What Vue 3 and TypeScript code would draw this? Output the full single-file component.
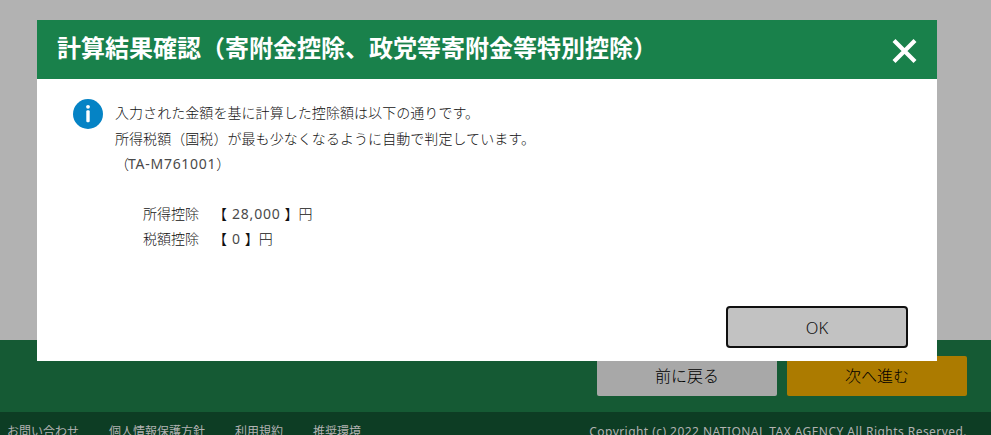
<script setup lang="ts">
interface Deduction {
  label: string
  amount: number
}

const footerLinks: string[] = ['お問い合わせ', '個人情報保護方針', '利用規約', '推奨環境']

const deductions: Deduction[] = [
  { label: '所得控除', amount: 28000 },
  { label: '税額控除', amount: 0 },
]

const yen = (n: number): string => n.toLocaleString('en-US')
</script>

<template>
  <div class="screen">
    <div class="page">
      <main class="content"></main>
      <nav class="actions">
        <button class="btn back" type="button">前に戻る</button>
        <button class="btn next" type="button">次へ進む</button>
      </nav>
      <footer class="footer">
        <ul class="links">
          <li v-for="link in footerLinks" :key="link">{{ link }}</li>
        </ul>
        <small class="copyright">Copyright (c) 2022 NATIONAL TAX AGENCY All Rights Reserved.</small>
      </footer>
    </div>

    <section class="dialog" role="dialog" aria-modal="true">
      <header class="dialog-header">
        <h1>計算結果確認（寄附金控除、政党等寄附金等特別控除）</h1>
        <button class="close" type="button">
          <svg viewBox="0 0 26 26" width="26" height="26">
            <path d="M3 2.5 L24 23.5 M24 2.5 L3 23.5" fill="none" stroke="#fff" stroke-width="4.2" />
          </svg>
        </button>
      </header>
      <div class="dialog-body">
        <svg class="info" viewBox="0 0 30 30" width="30" height="30">
          <circle cx="15" cy="15" r="15" fill="#0583c5" />
          <circle cx="15" cy="7.8" r="1.9" fill="#fff" />
          <rect x="13.3" y="11.3" width="3.4" height="12" rx="1.2" fill="#fff" />
        </svg>
        <div class="message">
          <p>入力された金額を基に計算した控除額は以下の通りです。</p>
          <p>所得税額（国税）が最も少なくなるように自動で判定しています。</p>
          <p>（<span class="code">TA-M761001</span>）</p>
          <dl>
            <div v-for="d in deductions" :key="d.label" class="row">
              <dt>{{ d.label }}</dt>
              <dd>【<span class="num">{{ yen(d.amount) }}</span>】円</dd>
            </div>
          </dl>
        </div>
      </div>
      <div class="dialog-footer">
        <button class="ok" type="button">OK</button>
      </div>
    </section>
  </div>
</template>

<style>
body {
  margin: 0;
  overflow: hidden;
}
</style>

<style scoped>
.screen {
  position: relative;
  height: 435px;
  overflow: hidden;
  font-family: 'Noto Sans', 'Noto Sans CJK JP', sans-serif;
  text-spacing-trim: space-all;
}
button {
  font-family: inherit;
  margin: 0;
  padding: 0;
  border: 0;
  box-sizing: border-box;
}
.page {
  display: flex;
  flex-direction: column;
  height: 100%;
}
.content {
  flex: 1;
  background: #b2b2b2;
}
.actions {
  display: flex;
  justify-content: flex-end;
  gap: 10px;
  height: 72px;
  padding: 16px 24px;
  box-sizing: border-box;
  background: #155a34;
}
.btn {
  width: 180px;
  height: 40px;
  border-radius: 2px;
  font-size: 16px;
  font-weight: 300;
  line-height: 40px;
  color: #000;
}
.back {
  background: #a8a8a8;
}
.next {
  background: #ac7b00;
}
.footer {
  display: flex;
  justify-content: space-between;
  height: 23px;
  padding: 10px 24px 0 7px;
  box-sizing: border-box;
  background: #0d3d24;
  color: #b2b2b2;
  font-size: 12px;
  line-height: 20px;
  white-space: nowrap;
}
.links {
  display: flex;
  gap: 30px;
  margin: 0;
  padding: 0;
  list-style: none;
}
.copyright {
  font-size: 12px;
  letter-spacing: 0.45px;
}
.dialog {
  position: absolute;
  left: 37px;
  top: 20px;
  display: flex;
  flex-direction: column;
  width: 900px;
  height: 341px;
  background: #fff;
}
.dialog-header {
  display: flex;
  justify-content: space-between;
  height: 59px;
  padding: 0 20px;
  background: #19814b;
}
h1 {
  margin: 0;
  font-size: 24px;
  font-weight: 700;
  line-height: 56px;
  color: #fff;
}
.close {
  width: 26px;
  height: 26px;
  margin-top: 18px;
  background: none;
}
.close svg {
  display: block;
}
.dialog-body {
  display: flex;
  flex: 1;
  gap: 12px;
  padding: 20px 36px 0;
}
.info {
  flex: none;
}
.message {
  padding-top: 1.4px;
  color: #111;
  font-size: 14px;
  font-weight: 300;
  line-height: 25.2px;
}
p {
  margin: 0;
  letter-spacing: 0.06px;
}
.code {
  margin-left: -1px;
  color: #4a4a4a;
  font-weight: 400;
  letter-spacing: 0.72px;
}
dl {
  margin: 24.6px 0 0 28px;
}
.row {
  display: flex;
  gap: 14px;
}
dd {
  margin: 0;
}
.num {
  margin: 0 4px 0 5px;
  color: #4a4a4a;
  font-weight: 400;
  letter-spacing: 0.8px;
}
.dialog-footer {
  display: flex;
  justify-content: flex-end;
  padding: 0 29px 13px;
}
.ok {
  width: 182px;
  height: 42px;
  border: 2px solid #101010;
  border-radius: 4px;
  background: #c2c2c2;
  color: #111;
  font-size: 16.5px;
  font-weight: 300;
}
</style>
